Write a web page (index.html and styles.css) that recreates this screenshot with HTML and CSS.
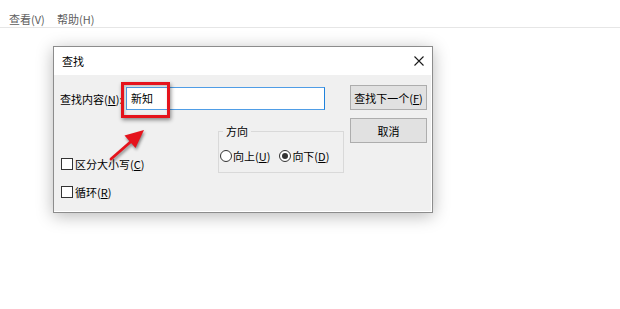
FILE: index.html
```html
<!DOCTYPE html>
<html lang="zh-CN">
<head>
<meta charset="utf-8">
<title>查找</title>
<link rel="stylesheet" href="styles.css">
</head>
<body>
<div class="menubar">
  <span class="menu-item">查看(V)</span>
  <span class="menu-item">帮助(H)</span>
</div>

<div class="dialog">
  <div class="titlebar">
    <span class="title">查找</span>
    <svg class="close" width="10" height="10" viewBox="0 0 10 10"><path d="M0.5 0.5 L9.5 9.5 M9.5 0.5 L0.5 9.5" stroke="#1a1a1a" stroke-width="1.1" fill="none"/></svg>
  </div>
  <div class="dbody">
    <div class="leftcol">
      <div class="row1">
        <span class="lbl">查找内容(<u>N</u>):</span>
        <div class="input">新知</div>
      </div>
      <div class="row2">
        <div class="check check-case"><span class="box"></span><span>区分大小写(<u>C</u>)</span></div>
        <fieldset class="group">
          <legend>方向</legend>
          <div class="radios">
            <div class="radio"><span class="circle"></span><span>向上(<u>U</u>)</span></div>
            <div class="radio radio-down"><span class="circle checked"></span><span>向下(<u>D</u>)</span></div>
          </div>
        </fieldset>
      </div>
      <div class="check check-loop"><span class="box"></span><span>循环(<u>R</u>)</span></div>
    </div>
    <div class="rightcol">
      <div class="btn">查找下一个(<u>F</u>)</div>
      <div class="btn">取消</div>
    </div>
  </div>
</div>

<div class="highlight"></div>
<svg class="arrow" width="60" height="60" viewBox="100 115 60 60">
  <line x1="111" y1="159" x2="131" y2="141.5" stroke="#e5131c" stroke-width="2.8" stroke-linecap="round"/>
  <polygon points="144,130 135.5,148 124.5,135.5" fill="#e5131c"/>
</svg>
</body>
</html>
```

FILE: styles.css
```css
html, body {
  margin: 0;
  padding: 0;
  background: #ffffff;
  font-family: "Noto Sans CJK SC", "Microsoft YaHei", sans-serif;
  font-size: 11px;
  color: #000;
}

.menubar {
  height: 28px;
  box-sizing: border-box;
  border-bottom: 1px solid #e6e6e6;
  display: flex;
  align-items: flex-start;
  padding: 11px 0 0 9px;
  line-height: 16px;
  color: #5e5e5e;
}

.menu-item {
  width: 48px;
  white-space: nowrap;
}

.dialog {
  position: absolute;
  left: 53px;
  top: 46px;
  width: 380px;
  height: 167px;
  box-sizing: border-box;
  border: 1px solid #8c8c8c;
  background: #f0f0f0;
  box-shadow: 0 3px 16px rgba(0, 0, 0, 0.28), inset -1px -1px 0 #ffffff;
}

.titlebar {
  height: 28px;
  background: #ffffff;
  display: flex;
  align-items: center;
  justify-content: space-between;
  padding: 0 8px 0 8px;
  line-height: 16px;
}

.close {
  display: block;
}

.dbody {
  display: flex;
  padding: 10px 5px 0 6px;
  line-height: 16px;
}

.leftcol {
  width: 284px;
  display: flex;
  flex-direction: column;
}

.row1 {
  display: flex;
  align-items: center;
  height: 25px;
  margin-top: 1px;
}

.lbl {
  width: 66px;
  white-space: nowrap;
}

.input {
  width: 199px;
  height: 23px;
  box-sizing: border-box;
  border: 1px solid #4f9de6;
  border-right-color: #1f82dc;
  background: #ffffff;
  padding-left: 4px;
  line-height: 21px;
}

.row2 {
  display: flex;
  margin-top: 13px;
}

.check {
  display: flex;
  align-items: center;
  gap: 2px;
  margin-left: 1px;
  height: 16px;
  white-space: nowrap;
}

.check-case {
  margin-top: 32px;
}

.check-loop {
  margin-top: 11px;
}

.box {
  width: 12px;
  height: 12px;
  box-sizing: border-box;
  border: 1px solid #333333;
  background: #ffffff;
}

.group {
  margin: 0 0 0 auto;
  width: 126px;
  box-sizing: border-box;
  border: 1px solid #d9d9d9;
  padding: 10px 0 8px 1px;
}

.group legend {
  padding: 0 3px;
  margin-left: 3px;
  line-height: 14px;
}

.radios {
  display: flex;
  align-items: center;
  height: 16px;
}

.radio {
  display: flex;
  align-items: center;
  gap: 1px;
  white-space: nowrap;
}

.radio-down {
  margin-left: 9px;
}

.circle {
  width: 12px;
  height: 12px;
  box-sizing: border-box;
  border: 1px solid #333333;
  border-radius: 50%;
  background: #ffffff;
  display: flex;
  align-items: center;
  justify-content: center;
}

.circle.checked::after {
  content: "";
  width: 6px;
  height: 6px;
  border-radius: 50%;
  background: #333333;
}

.rightcol {
  margin-left: 6px;
  display: flex;
  flex-direction: column;
  gap: 8px;
}

.btn {
  width: 77px;
  height: 25px;
  box-sizing: border-box;
  border: 1px solid #adadad;
  background: #e1e1e1;
  display: flex;
  align-items: center;
  justify-content: center;
  white-space: nowrap;
}

.highlight {
  position: absolute;
  left: 121px;
  top: 82px;
  width: 49px;
  height: 36px;
  box-sizing: border-box;
  border: 3px solid #e5131c;
  box-shadow: 1px 2px 4px rgba(0, 0, 0, 0.45), inset 1px 1px 3px rgba(0, 0, 0, 0.25);
}

.arrow {
  position: absolute;
  left: 100px;
  top: 115px;
  filter: drop-shadow(1px 2px 1.5px rgba(0, 0, 0, 0.45));
}
```
